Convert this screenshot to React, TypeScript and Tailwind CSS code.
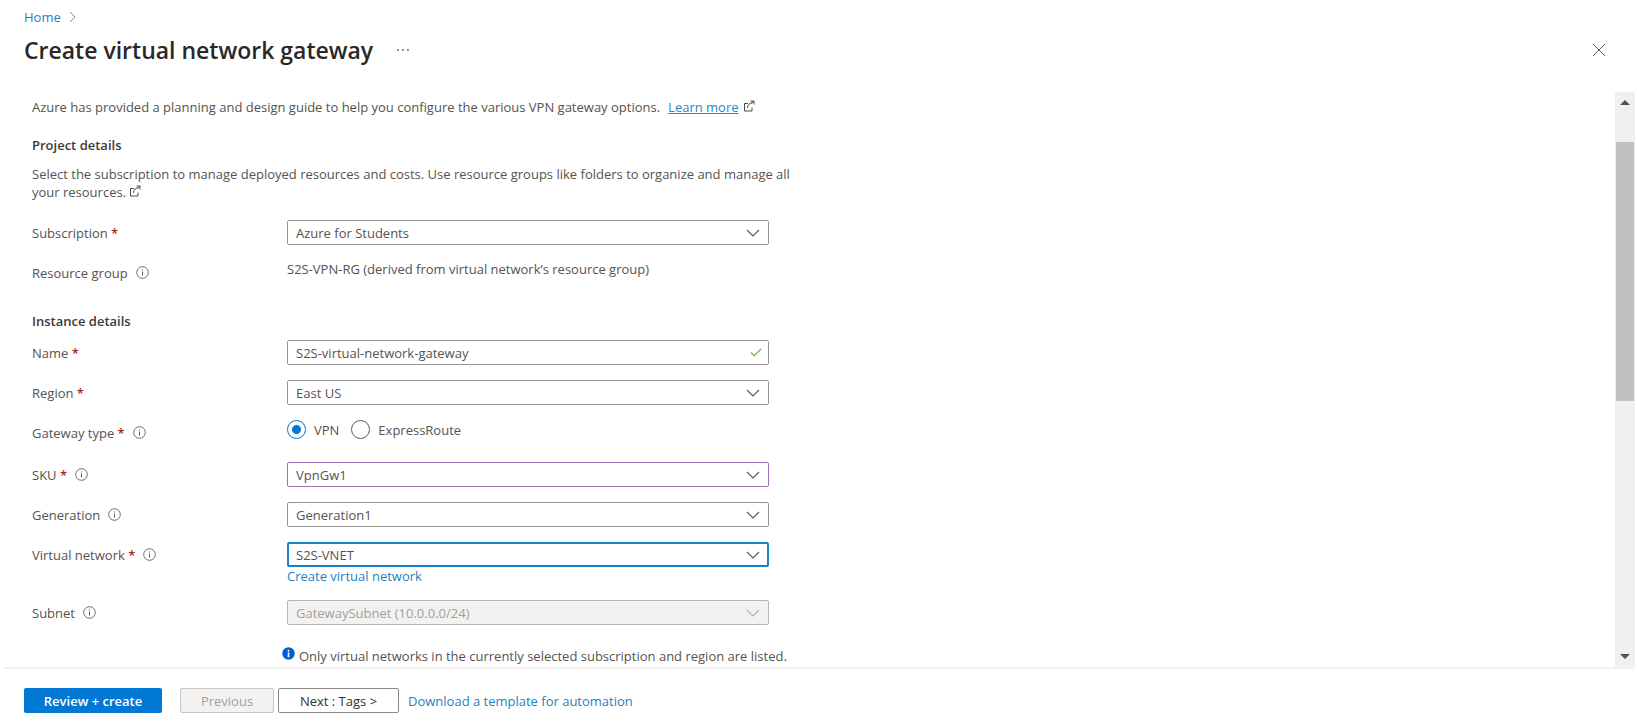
import React, { useState } from 'react';
import clsx from 'clsx';

function ExternalIcon() {
  return (
    <svg viewBox="0 0 12 12" className="inline-block w-3 h-3 align-baseline" fill="none" stroke="#4c4a48" aria-hidden="true">
      <path d="M5 3.5H1.5V11H9V7.5" />
      <path d="M4.5 8c0-3 1.8-5 5.5-5.5" />
      <path d="M7.5 1H11v3.5" />
      <path d="M8.5 3.5L11 1" />
    </svg>
  );
}

function InfoIcon() {
  return (
    <svg viewBox="0 0 13 13" className="w-[13px] h-[13px]" fill="none" stroke="#605e5c" aria-hidden="true">
      <circle cx="6.5" cy="6.5" r="5.8" strokeWidth="0.9" />
      <path d="M6.5 5.6v4" />
      <path d="M6.5 3.4v1.1" />
    </svg>
  );
}

function Chevron({ disabled }: { disabled?: boolean }) {
  return (
    <svg
      viewBox="0 0 14 8"
      className="absolute right-[9px] top-1/2 -translate-y-1/2 w-[14px] h-2 pointer-events-none"
      fill="none"
      stroke={disabled ? '#b5b3b1' : '#605e5c'}
      strokeWidth="1.2"
      aria-hidden="true"
    >
      <path d="M1 1l6 6 6-6" />
    </svg>
  );
}

type RowProps = {
  label: string;
  htmlFor?: string;
  required?: boolean;
  info?: boolean;
  children: React.ReactNode;
};

function Row({ label, htmlFor, required, info, children }: RowProps) {
  return (
    <div className="grid grid-cols-[255px_minmax(0,1fr)] items-start">
      <div className="flex items-center h-[25px]">
        <label htmlFor={htmlFor}>
          {label}
          {required && <span className="text-[#a4262c] font-semibold"> *</span>}
        </label>
        {info && (
          <button type="button" aria-label={`About ${label}`} className="ml-2">
            <InfoIcon />
          </button>
        )}
      </div>
      <div>{children}</div>
    </div>
  );
}

type SelectProps = {
  id: string;
  value: string;
  tone?: 'default' | 'changed' | 'focused';
  disabled?: boolean;
};

function SelectField({ id, value, tone = 'default', disabled }: SelectProps) {
  return (
    <div className="relative">
      <select
        id={id}
        defaultValue={value}
        disabled={disabled}
        className={clsx(
          'block appearance-none w-full h-[25px] rounded-xs outline-none',
          tone === 'default' && !disabled && 'border border-[#979593] px-2 bg-white',
          tone === 'changed' && 'border border-[#a56fb8] px-2 bg-white',
          tone === 'focused' && 'border-2 border-[#1b80cc] px-[7px] bg-white',
          disabled && 'border border-[#b9b7b5] px-2 bg-[#f3f2f1] text-[#a19f9d] opacity-100'
        )}
      >
        <option>{value}</option>
      </select>
      <Chevron disabled={disabled} />
    </div>
  );
}

export default function App() {
  const [name, setName] = useState('S2S-virtual-network-gateway');
  const [gatewayType, setGatewayType] = useState('VPN');

  return (
    <div className="flex flex-col h-screen bg-white text-[13px] leading-[18px] text-[#555350] font-['Open_Sans',sans-serif]">
      {/* Breadcrumb + title */}
      <header className="px-6 pt-2 pb-[26px]">
        <nav aria-label="Breadcrumb" className="flex items-center gap-2">
          <a href="#" className="text-[#1f7fc0]">Home</a>
          <svg viewBox="0 0 7 12" className="w-[7px] h-3" fill="none" stroke="#8a8886" aria-hidden="true">
            <path d="M1 1l5 5-5 5" />
          </svg>
        </nav>
        <div className="flex items-center justify-between pt-2 pr-[7px]">
          <div className="flex items-center gap-6">
            <h1 className="text-[23px] leading-8 font-semibold text-[#292827]">Create virtual network gateway</h1>
            <button type="button" aria-label="More actions">
              <svg viewBox="0 0 12 4" className="w-3 h-1" fill="#605e5c" aria-hidden="true">
                <circle cx="1" cy="2" r="0.9" />
                <circle cx="6" cy="2" r="0.9" />
                <circle cx="11" cy="2" r="0.9" />
              </svg>
            </button>
          </div>
          <button type="button" aria-label="Close">
            <svg viewBox="0 0 14 14" className="w-[14px] h-[14px]" fill="none" stroke="#605e5c" aria-hidden="true">
              <path d="M1 1l12 12M13 1L1 13" />
            </svg>
          </button>
        </div>
      </header>

      <div className="flex flex-1 min-h-0 pr-[2px]">
        <main className="flex-1 min-w-0 overflow-hidden pl-8 pt-[6px]">
          <p>
            Azure has provided a planning and design guide to help you configure the various VPN gateway options.
            <a href="#" className="ml-2 mr-1 text-[#1f8ad0] underline">Learn more</a>
            <ExternalIcon />
          </p>

          <h2 className="mt-[19px] text-[13px] leading-5 font-semibold text-[#3b3a39]">Project details</h2>
          <p className="mt-[10px] max-w-[760px]">
            Select the subscription to manage deployed resources and costs. Use resource groups like folders to organize and manage all your resources. <ExternalIcon />
          </p>

          <div className="max-w-[737px]">
            <div className="flex flex-col gap-[15px] mt-[19px]">
              <Row label="Subscription" htmlFor="subscription" required>
                <SelectField id="subscription" value="Azure for Students" />
              </Row>
              <Row label="Resource group" info>
                <p>S2S-VPN-RG (derived from virtual network’s resource group)</p>
              </Row>
            </div>

            <h2 className="mt-[26px] text-[13px] leading-5 font-semibold text-[#3b3a39]">Instance details</h2>
            <div className="flex flex-col gap-[15px] mt-[9px]">
              <Row label="Name" htmlFor="name" required>
                <div className="relative">
                  <input
                    id="name"
                    type="text"
                    value={name}
                    onChange={(e) => setName(e.target.value)}
                    className="block w-full h-[25px] border border-[#979593] rounded-xs pl-2 pr-8 outline-none"
                  />
                  <svg viewBox="0 0 12 9" className="absolute right-[7px] top-2 w-3 h-[9px]" fill="none" stroke="#7fb84a" strokeWidth="1.4" aria-hidden="true">
                    <path d="M1 4.5l3.2 3.2L11.2 0.8" />
                  </svg>
                </div>
              </Row>
              <Row label="Region" htmlFor="region" required>
                <SelectField id="region" value="East US" />
              </Row>
              <Row label="Gateway type" required info>
                <div role="radiogroup" aria-label="Gateway type" className="flex items-center gap-3 pb-2">
                  {['VPN', 'ExpressRoute'].map((type) => (
                    <label key={type} className="flex items-center gap-2">
                      <input
                        type="radio"
                        name="gateway-type"
                        checked={gatewayType === type}
                        onChange={() => setGatewayType(type)}
                        className="appearance-none w-[19px] h-[19px] rounded-full border border-[#605e5c] checked:border-[#0078d4] checked:bg-[radial-gradient(circle,#0078d4_4px,transparent_5px)]"
                      />
                      {type}
                    </label>
                  ))}
                </div>
              </Row>
              <Row label="SKU" htmlFor="sku" required info>
                <SelectField id="sku" value="VpnGw1" tone="changed" />
              </Row>
              <Row label="Generation" htmlFor="generation" info>
                <SelectField id="generation" value="Generation1" />
              </Row>
              <Row label="Virtual network" htmlFor="vnet" required info>
                <SelectField id="vnet" value="S2S-VNET" tone="focused" />
                <a href="#" className="block text-[#1f7fc0]">Create virtual network</a>
              </Row>
              <Row label="Subnet" htmlFor="subnet" info>
                <SelectField id="subnet" value="GatewaySubnet (10.0.0.0/24)" disabled />
              </Row>
            </div>

            <p className="flex gap-1 mt-[22px] pl-[250px] whitespace-nowrap">
              <svg viewBox="0 0 13 13" className="w-[13px] h-[13px] shrink-0" aria-hidden="true">
                <circle cx="6.5" cy="6.5" r="6.2" fill="#015cda" />
                <path d="M6.5 5.6v4.6M6.5 2.8v1.7" stroke="#fff" strokeWidth="1.6" />
              </svg>
              Only virtual networks in the currently selected subscription and region are listed.
            </p>
          </div>
        </main>

        {/* Scroll track */}
        <div className="flex flex-col items-center w-5 bg-[#f0f0f0]" aria-hidden="true">
          <svg viewBox="0 0 10 5" className="w-[10px] h-[5px] mt-2" fill="#505050">
            <path d="M0 5l5-5 5 5z" />
          </svg>
          <div className="w-[18px] h-[45%] mt-[37px] bg-[#c1c1c1]" />
          <svg viewBox="0 0 10 5" className="w-[10px] h-[5px] mt-auto mb-2" fill="#505050">
            <path d="M0 0l5 5 5-5z" />
          </svg>
        </div>
      </div>

      <footer className="flex items-center ml-1 mr-[3px] border-t-2 border-[#f0efee] pl-5 pt-[19px] pb-3">
        <button type="button" className="w-[138px] h-[25px] rounded-xs bg-[#0078d4] text-white font-semibold">Review + create</button>
        <button type="button" disabled className="w-[94px] h-[25px] ml-[18px] rounded-xs border border-[#c8c6c4] bg-[#f3f2f1] text-[#a19f9d] font-medium">Previous</button>
        <button type="button" className="w-[121px] h-[25px] ml-1 rounded-xs border border-[#8a8886] text-[#323130] font-medium">Next : Tags &gt;</button>
        <a href="#" className="ml-[9px] text-[#1f7fc0]">Download a template for automation</a>
      </footer>
    </div>
  );
}
